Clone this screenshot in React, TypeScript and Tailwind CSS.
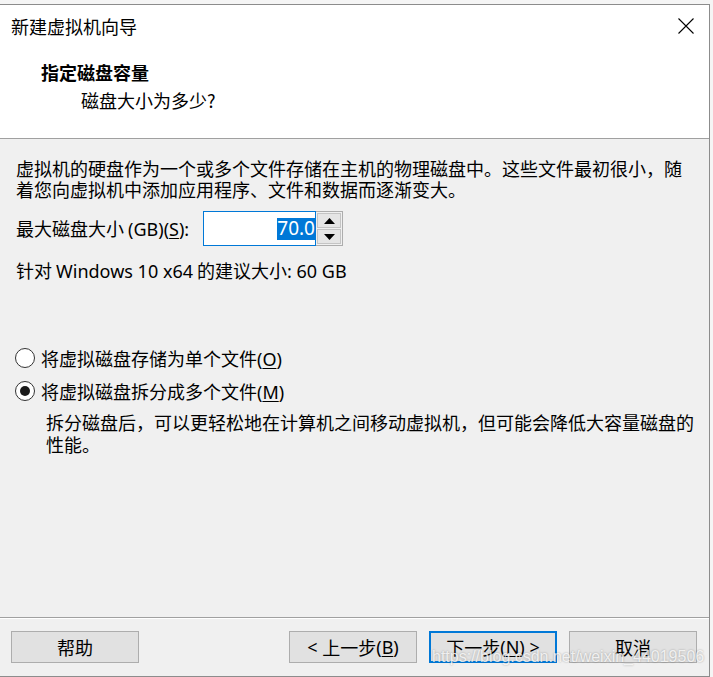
import React from "react";

function L({ children }: { children: React.ReactNode }) {
  return <span className="font-['Noto_Sans',sans-serif] text-[18px]">{children}</span>;
}

function U({ children }: { children: React.ReactNode }) {
  return <span className="underline underline-offset-2">{children}</span>;
}

function Radio({ checked }: { checked?: boolean }) {
  return (
    <span className="w-[20px] h-[20px] rounded-full border border-[#333333] bg-white flex items-center justify-center shrink-0">
      {checked ? <span className="w-[10px] h-[10px] rounded-full bg-[#1a1a1a]" /> : null}
    </span>
  );
}

function Btn({ children, primary }: { children: React.ReactNode; primary?: boolean }) {
  return (
    <div
      className={
        "w-[128px] h-[32px] flex items-center justify-center bg-[#e1e1e1] text-[18px] leading-none " +
        (primary ? "border-2 border-[#0078d7]" : "border border-[#adadad]")
      }
    >
      {children}
    </div>
  );
}

export default function App() {
  return (
    <div className="w-[713px] h-[677px] bg-[#f5f5f5] relative overflow-hidden font-['Noto_Sans_CJK_SC',sans-serif] text-black">
      <div className="h-[4px]" />
      <div className="w-[710px] h-[673px] flex flex-col border-t border-r border-b border-[#8c8c8c] bg-[#f0f0f0]">
        {/* header */}
        <div className="h-[134px] bg-white border-b border-[#a0a0a0] flex flex-col">
          <div className="mt-[10px] h-[22px] flex items-center justify-between pl-[11px] pr-[15px]">
            <span className="text-[18px] leading-[22px]">新建虚拟机向导</span>
            <svg width="16" height="16" viewBox="0 0 16 16" className="block">
              <path d="M0.5 0.5 L15.5 15.5 M15.5 0.5 L0.5 15.5" stroke="#000" strokeWidth="1.1" fill="none" />
            </svg>
          </div>
          <div className="mt-[24px] pl-[41px] text-[18px] leading-[22px] font-bold">指定磁盘容量</div>
          <div className="mt-[6px] pl-[81px] text-[18px] leading-[22px]">磁盘大小为多少?</div>
        </div>

        {/* body */}
        <div className="flex-1 flex flex-col pl-[16px] pr-[12px]">
          <p className="mt-[19px] text-[18px] leading-[21px]">
            虚拟机的硬盘作为一个或多个文件存储在主机的物理磁盘中。这些文件最初很小，随着您向虚拟机中添加应用程序、文件和数据而逐渐变大。
          </p>
          <div className="mt-[11px] h-[35px] flex items-center">
            <span className="w-[187px] text-[18px] leading-[22px] whitespace-nowrap">
              最大磁盘大小 <L>(GB)(<U>S</U>):</L>
            </span>
            <div className="w-[113px] h-[35px] border border-[#0078d7] bg-white flex items-center justify-end">
              <span className="bg-[#0078d7] text-white h-[22px] flex items-center font-['Noto_Sans',sans-serif] text-[19px] leading-none">
                70.0
              </span>
            </div>
            <div className="w-[27px] h-[35px] border border-[#adadad] border-l-0 flex flex-col bg-[#f0f0f0]">
              <div className="flex-1 m-[1px] mb-0 border border-[#c4c4c4] bg-[#e5e5e5] flex items-center justify-center">
                <svg width="11" height="6" viewBox="0 0 11 6"><path d="M0 6 L5.5 0 L11 6 Z" fill="#000" /></svg>
              </div>
              <div className="flex-1 m-[1px] border border-[#c4c4c4] bg-[#e5e5e5] flex items-center justify-center">
                <svg width="11" height="6" viewBox="0 0 11 6"><path d="M0 0 L11 0 L5.5 6 Z" fill="#000" /></svg>
              </div>
            </div>
          </div>
          <div className="mt-[13px] text-[18px] leading-[22px] whitespace-nowrap">
            针对 <L>Windows 10 x64</L> 的建议大小<L>: 60 GB</L>
          </div>

          <div className="mt-[65px] h-[22px] flex items-center -ml-[1px]">
            <Radio />
            <span className="ml-[6px] text-[18px] leading-[22px]">
              将虚拟磁盘存储为单个文件<L>(<U>O</U>)</L>
            </span>
          </div>
          <div className="mt-[11px] h-[22px] flex items-center -ml-[1px]">
            <Radio checked />
            <span className="ml-[6px] text-[18px] leading-[22px]">
              将虚拟磁盘拆分成多个文件<L>(<U>M</U>)</L>
            </span>
          </div>
          <p className="mt-[9px] ml-[30px] text-[18px] leading-[22px]">
            拆分磁盘后，可以更轻松地在计算机之间移动虚拟机，但可能会降低大容量磁盘的性能。
          </p>
        </div>

        {/* footer */}
        <div className="h-[59px] border-t border-[#a0a0a0] flex flex-col">
          <div className="h-[1px] bg-white" />
          <div className="mt-[12px] flex items-center pl-[11px] pr-[12px]">
            <Btn>帮助</Btn>
            <div className="flex-1" />
            <Btn>
              <L>&lt;&nbsp;</L>上一步<L>(<U>B</U>)</L>
            </Btn>
            <div className="w-[12px]" />
            <Btn primary>
              下一步<L>(<U>N</U>)&nbsp;&gt;</L>
            </Btn>
            <div className="w-[12px]" />
            <Btn>取消</Btn>
          </div>
        </div>
      </div>

      <div className="absolute left-[432px] top-[647px] text-[16px] leading-[20px] font-['Liberation_Sans',Arial,sans-serif] text-white/80 [text-shadow:0_0_2px_rgba(0,0,0,0.35)] pointer-events-none">
        https://blog.csdn.net/weixin_44019506
      </div>
    </div>
  );
}
